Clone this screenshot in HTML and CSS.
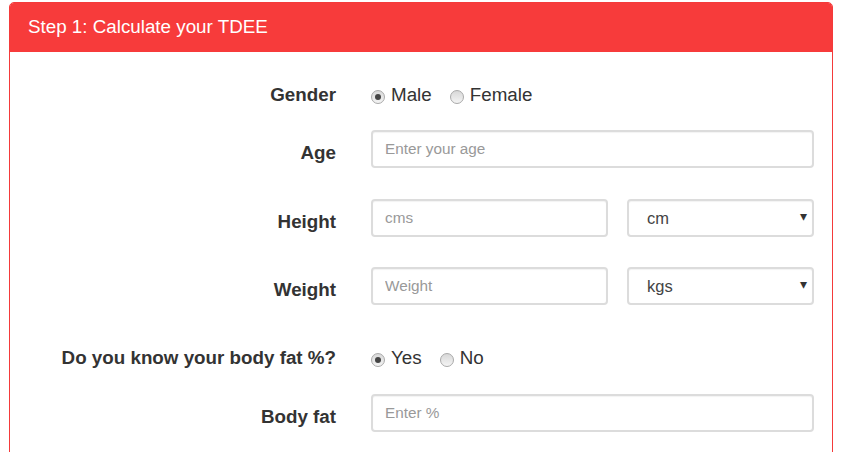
FILE: index.html
```html
<!DOCTYPE html>
<html lang="en">
<head>
    <meta charset="UTF-8">
    <meta name="viewport" content="width=device-width, initial-scale=1.0">
    <title>TDEE Calculator</title>
    <link rel="stylesheet" href="styles.css">
</head>
<body>
    <div class="panel">
        <div class="panel-heading">Step 1: Calculate your TDEE</div>
        <form class="panel-body">
            <div class="row row-radio row-gender">
                <label class="control-label">Gender</label>
                <div class="controls">
                    <label class="radio"><input type="radio" name="gender" checked> Male</label>
                    <label class="radio"><input type="radio" name="gender"> Female</label>
                </div>
            </div>

            <div class="row row-age">
                <label class="control-label" for="age">Age</label>
                <div class="controls">
                    <input type="text" id="age" class="form-control" placeholder="Enter your age">
                </div>
            </div>

            <div class="row row-height">
                <label class="control-label" for="height">Height</label>
                <div class="controls split">
                    <input type="text" id="height" class="form-control" placeholder="cms">
                    <span class="select-wrap">
                        <select class="form-control">
                            <option>cm</option>
                            <option>feet</option>
                        </select>
                    </span>
                </div>
            </div>

            <div class="row row-weight">
                <label class="control-label" for="weight">Weight</label>
                <div class="controls split">
                    <input type="text" id="weight" class="form-control" placeholder="Weight">
                    <span class="select-wrap">
                        <select class="form-control">
                            <option>kgs</option>
                            <option>lbs</option>
                        </select>
                    </span>
                </div>
            </div>

            <div class="row row-radio row-know">
                <label class="control-label">Do you know your body fat %?</label>
                <div class="controls">
                    <label class="radio"><input type="radio" name="knowfat" checked> Yes</label>
                    <label class="radio"><input type="radio" name="knowfat"> No</label>
                </div>
            </div>

            <div class="row">
                <label class="control-label" for="bodyfat">Body fat</label>
                <div class="controls">
                    <input type="text" id="bodyfat" class="form-control" placeholder="Enter %">
                </div>
            </div>
        </form>
    </div>
</body>
</html>
```

FILE: styles.css
```css
body {
    margin: 0;
    font-family: "Liberation Sans", Arial, sans-serif;
    color: #333;
    background-color: #fff;
}
.panel {
    margin: 2px 14px 0 9px;
    border: 1px solid #f43a3a;
    border-radius: 5px 5px 0 0;
    height: 470px;
}
.panel-heading {
    background-color: #f73b3b;
    color: #fff;
    font-size: 18.8px;
    line-height: 20px;
    padding: 14px 18px 15px;
    border-radius: 4px 4px 0 0;
}
.panel-body {
    padding: 31px 18px 0 0;
}
.row {
    display: flex;
    align-items: flex-start;
}
.control-label {
    width: 326px;
    flex: none;
    text-align: right;
    font-weight: bold;
    font-size: 18.8px;
    line-height: 20px;
    padding-top: 13px;
    margin-right: 35px;
}
.controls {
    flex: 1;
    display: flex;
    align-items: center;
}
.split {
    gap: 19px;
}
.row-radio {
    align-items: center;
    height: 24px;
}
.row-radio .control-label {
    padding-top: 0;
}
.row-gender { margin-bottom: 23px; }
.row-age { margin-bottom: 31px; }
.row-height { margin-bottom: 30px; }
.row-weight { margin-bottom: 41px; }
.row-know { margin-bottom: 24px; }

.radio {
    display: flex;
    align-items: center;
    font-size: 18.8px;
    line-height: 20px;
    margin-right: 18px;
    color: #333;
}
.radio input {
    appearance: none;
    -webkit-appearance: none;
    width: 14px;
    height: 14px;
    margin: 4px 6px 0 0;
    border: 1px solid #a9a9a9;
    border-radius: 50%;
    background: linear-gradient(#d8d8d8, #f4f4f4);
    position: relative;
}
.radio input:checked::after {
    content: "";
    position: absolute;
    left: 3px;
    top: 3px;
    width: 6px;
    height: 6px;
    border-radius: 50%;
    background-color: #444;
}
.form-control {
    box-sizing: border-box;
    width: 100%;
    height: 38px;
    padding: 0 12px;
    border: 2px solid #dcdcdc;
    border-radius: 4px;
    font-family: inherit;
    font-size: 15.3px;
    color: #555;
    background-color: #fff;
    box-shadow: inset 0 1px 1px rgba(0,0,0,0.05);
}
.form-control::placeholder {
    color: #999;
}
.split input.form-control {
    width: 237px;
    flex: none;
}
.select-wrap {
    position: relative;
    flex: 1;
}
.select-wrap select {
    appearance: none;
    -webkit-appearance: none;
    padding-left: 18px;
    font-size: 16.5px;
    color: #444;
}
.select-wrap::after {
    content: "\25BE";
    position: absolute;
    right: 7px;
    top: 9px;
    font-size: 14px;
    color: #333;
    pointer-events: none;
}
```
